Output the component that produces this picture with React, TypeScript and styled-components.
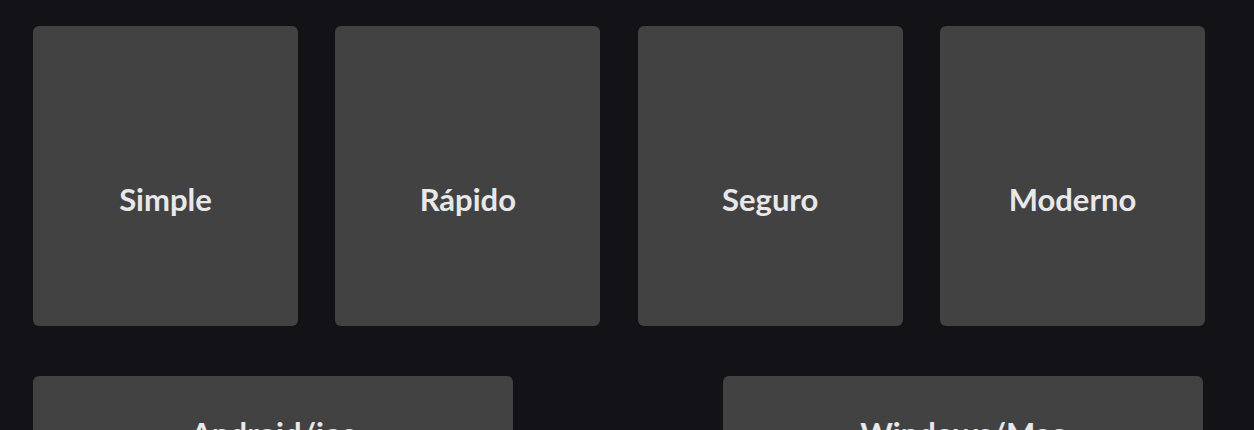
import React from "react";
import styled, { createGlobalStyle } from "styled-components";

const GlobalStyle = createGlobalStyle`
  html, body {
    margin: 0;
    padding: 0;
    background: #131217;
  }
  body {
    font-family: Lato, "Open Sans", sans-serif;
    overflow: hidden;
  }
`;

const Page = styled.div`
  display: flex;
  flex-direction: column;
  gap: 50px;
  padding: 26px 0 0 33px;
  min-height: 430px;
  box-sizing: border-box;
`;

const FeatureRow = styled.div`
  width: 1172px;
  display: grid;
  grid-template-columns: repeat(4, 265px);
  justify-content: space-between;
`;

const PlatformRow = styled.div`
  width: 1170px;
  display: grid;
  grid-template-columns: repeat(2, 480px);
  justify-content: space-between;
`;

const Card = styled.div<{ $height: number; $padTop: number; $center?: boolean }>`
  box-sizing: border-box;
  height: ${(p) => p.$height}px;
  padding-top: ${(p) => p.$padTop}px;
  background: #424242;
  border-radius: 6px;
  display: flex;
  justify-content: center;
  align-items: ${(p) => (p.$center ? "center" : "flex-start")};
`;

const Title = styled.h2`
  margin: 0;
  font-family: Lato, "Open Sans", sans-serif;
  font-weight: 700;
  font-size: 31px;
  line-height: 40px;
  color: #e8e8ea;
`;

const features = ["Simple", "Rápido", "Seguro", "Moderno"];
const platforms = ["Android/ios", "Windows/Mac"];

export default function App() {
  return (
    <>
      <GlobalStyle />
      <Page>
        <FeatureRow>
          {features.map((f) => (
            <Card key={f} $height={300} $padTop={46} $center>
              <Title>{f}</Title>
            </Card>
          ))}
        </FeatureRow>
        <PlatformRow>
          {platforms.map((p) => (
            <Card key={p} $height={140} $padTop={37}>
              <Title>{p}</Title>
            </Card>
          ))}
        </PlatformRow>
      </Page>
    </>
  );
}
